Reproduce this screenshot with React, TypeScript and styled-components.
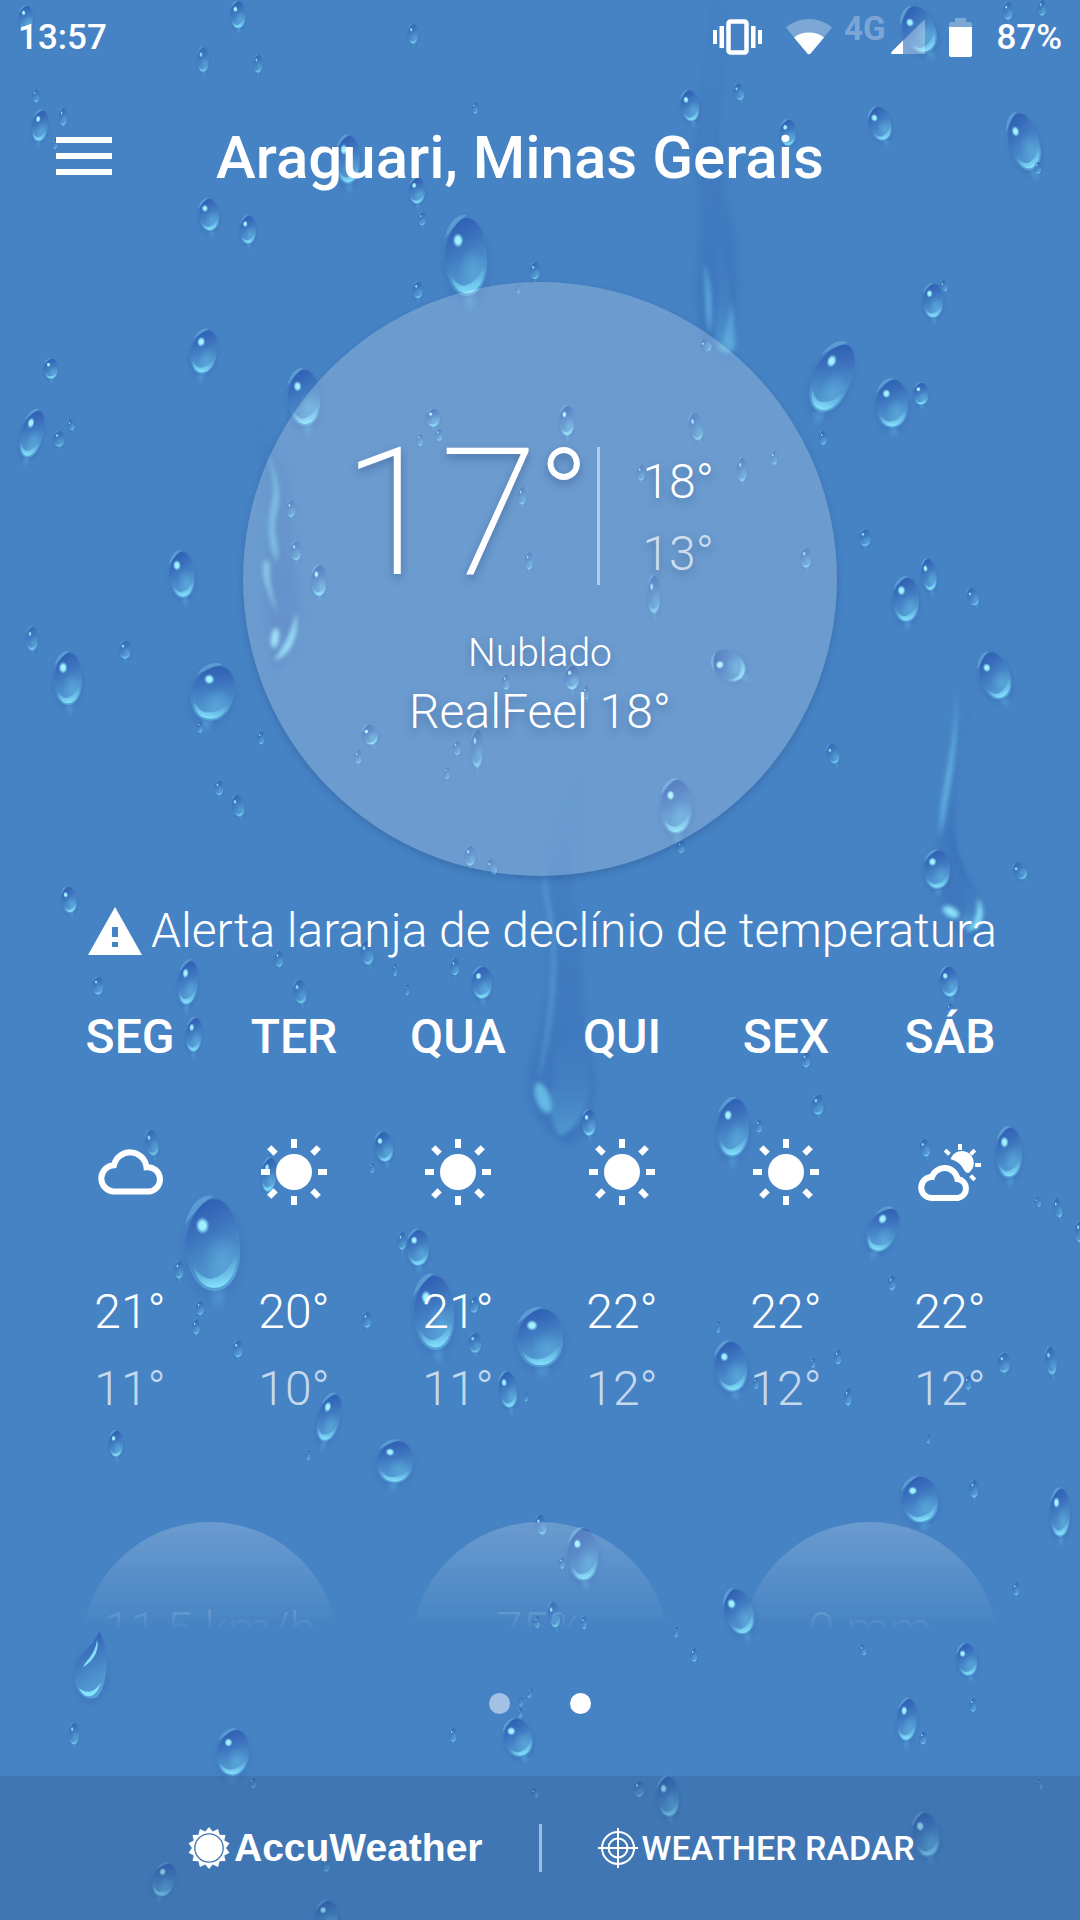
import React from "react";
import styled, { createGlobalStyle } from "styled-components";

const GlobalStyle = createGlobalStyle`
  *, *::before, *::after { box-sizing: border-box; }
  body { margin: 0; background: #4683c4; }
  h1, h2, p, ul { margin: 0; padding: 0; font-weight: inherit; }
  ul { list-style: none; }
`;

const Screen = styled.div`
  position: relative;
  min-height: 100vh;
  overflow: hidden;
  display: flex;
  flex-direction: column;
  background: #4683c4;
  color: #fff;
  font-family: Roboto, "Liberation Sans", sans-serif;
`;

const Backdrop = styled.svg`
  position: absolute;
  inset: 0;
  width: 100%;
  height: 100%;
  pointer-events: none;
`;

const StatusBar = styled.div`
  position: relative;
  display: flex;
  align-items: center;
  justify-content: space-between;
  height: 74px;
  padding: 0 18px;
  font-size: 35px;
  font-weight: 500;
`;

const StatusIcons = styled.div`
  display: flex;
  align-items: center;
  gap: 24px;
`;

const Network = styled.div`
  display: flex;
  align-items: center;
  gap: 6px;
`;

const Connections = styled.div`
  display: flex;
  align-items: center;
  gap: 12px;
`;

const NetworkLabel = styled.span`
  align-self: flex-start;
  font-size: 33px;
  line-height: 18px;
  font-weight: 700;
  color: rgba(255, 255, 255, 0.3);
`;

const Header = styled.header`
  position: relative;
  display: flex;
  align-items: center;
  gap: 104px;
  height: 164px;
  padding: 0 56px;
`;

const MenuButton = styled.button`
  display: flex;
  flex-direction: column;
  gap: 10px;
  width: 56px;
  padding: 0;
  border: 0;
  background: none;
  cursor: pointer;
`;

const MenuBar = styled.span`
  height: 6px;
  background: #fff;
`;

const City = styled.h1`
  padding-top: 4px;
  font-size: 60px;
  line-height: 72px;
  font-weight: 500;
`;

const Main = styled.main`
  position: relative;
  flex: 1;
  display: flex;
  flex-direction: column;
`;

const Current = styled.section`
  align-self: center;
  width: 594px;
  height: 594px;
  margin-top: 44px;
  padding-top: 138px;
  display: flex;
  flex-direction: column;
  align-items: center;
  border-radius: 50%;
  background: rgba(255, 255, 255, 0.2);
  box-shadow: 0 3px 6px rgba(20, 50, 110, 0.25);
  text-shadow: 0 4px 8px rgba(20, 50, 100, 0.35);
`;

const Readings = styled.div`
  display: flex;
  align-items: center;
  height: 192px;
  padding-right: 24px;
`;

const Temperature = styled.p`
  display: flex;
  align-items: flex-start;
  padding-bottom: 6px;
  font-size: 178px;
  line-height: 192px;
  font-weight: 200;
`;

const DegreeSign = styled.span`
  font-size: 136px;
  line-height: 164px;
  font-weight: 300;
`;

const Range = styled.div`
  display: flex;
  flex-direction: column;
  gap: 16px;
  margin-left: 8px;
  padding: 7px 0 3px 42px;
  border-left: 3px solid rgba(255, 255, 255, 0.5);
`;

const Degrees = styled.p<{ $low?: boolean }>`
  font-size: 48px;
  line-height: 56px;
  font-weight: 300;
  color: ${(p) => (p.$low ? "rgba(255, 255, 255, 0.7)" : "#fff")};
`;

const Condition = styled.p`
  margin-top: 17px;
  font-size: 39px;
  line-height: 48px;
  font-weight: 300;
`;

const RealFeel = styled.p`
  margin-top: 7px;
  font-size: 48px;
  line-height: 56px;
  font-weight: 300;
`;

const Alert = styled.a`
  display: flex;
  align-items: center;
  gap: 9px;
  margin-top: 26px;
  padding: 0 40px 0 88px;
  color: #fff;
  font-size: 48px;
  line-height: 58px;
  font-weight: 300;
  text-decoration: none;
  white-space: nowrap;
`;

const Forecast = styled.ul`
  display: grid;
  grid-template-columns: repeat(6, 1fr);
  margin-top: 49px;
  padding: 0 48px;
`;

const Day = styled.li`
  display: flex;
  flex-direction: column;
  align-items: center;
`;

const DayName = styled.h2`
  font-size: 48px;
  line-height: 56px;
  font-weight: 500;
`;

const DayIcon = styled.div`
  display: flex;
  align-items: center;
  justify-content: center;
  height: 66px;
  margin: 74px 0;
`;

const DayTemps = styled.div`
  display: flex;
  flex-direction: column;
  gap: 21px;
  padding-top: 5px;
`;

const Gauges = styled.div`
  display: grid;
  grid-template-columns: repeat(3, 1fr);
  height: 108px;
  margin-top: 105px;
  padding: 0 45px;
  overflow: hidden;
  mask-image: linear-gradient(#000, rgba(0, 0, 0, 0.5) 50%, transparent);
`;

const Gauge = styled.div`
  justify-self: center;
  width: 258px;
  height: 258px;
  padding-top: 80px;
  border-radius: 50%;
  background: rgba(255, 255, 255, 0.2);
  font-size: 48px;
  line-height: 56px;
  font-weight: 300;
  text-align: center;
`;

const Pager = styled.nav`
  display: flex;
  justify-content: center;
  gap: 60px;
  margin: 63px 0 60px;
`;

const Dot = styled.button<{ $active?: boolean }>`
  width: 21px;
  height: 21px;
  padding: 0;
  border: 0;
  border-radius: 50%;
  background: ${(p) => (p.$active ? "#fff" : "rgba(255, 255, 255, 0.5)")};
  cursor: pointer;
`;

const Footer = styled.footer`
  position: relative;
  display: grid;
  grid-template-columns: 1fr 3px 1fr;
  align-items: center;
  gap: 56px;
  height: 144px;
  background: rgba(50, 88, 140, 0.3);
`;

const FooterRule = styled.span`
  height: 48px;
  background: rgba(255, 255, 255, 0.5);
`;

const BrandLink = styled.a<{ $end?: boolean }>`
  justify-self: ${(p) => (p.$end ? "end" : "start")};
  display: flex;
  align-items: center;
  gap: 4px;
  color: #fff;
  text-decoration: none;
  white-space: nowrap;
  font-size: ${(p) => (p.$end ? "39px" : "34px")};
  font-weight: ${(p) => (p.$end ? 700 : 500)};
  font-family: ${(p) =>
    p.$end ? '"Liberation Sans", Arial, sans-serif' : 'Roboto, "Liberation Sans", sans-serif'};
`;

/* ---------- wallpaper ---------- */

// centre x, centre y, width, height, tilt in degrees
type DropSpec = [number, number, number, number, number?];

const drops: DropSpec[] = [
  [26, 18, 14, 24], [238, 15, 15, 27], [413, 34, 10, 20], [203, 60, 12, 25], [258, 64, 9, 18],
  [36, 96, 7, 13], [40, 126, 16, 31, 8], [63, 117, 8, 18], [55, 144, 6, 10], [475, 108, 6, 12],
  [348, 160, 24, 48], [690, 106, 18, 31, -8], [739, 92, 10, 17, -12], [788, 133, 16, 26],
  [880, 124, 22, 34, -15], [1024, 142, 30, 58, -16], [1038, 168, 7, 12], [209, 215, 20, 32, -5],
  [248, 230, 16, 28], [417, 191, 16, 26], [422, 219, 8, 13], [466, 257, 42, 78, -2],
  [1008, 11, 10, 18], [1042, 8, 8, 16], [919, 30, 32, 48, -22],
  [204, 352, 26, 44, 10], [51, 369, 14, 20], [32, 434, 22, 48, 15], [59, 439, 11, 16],
  [71, 425, 7, 11, -15], [182, 575, 25, 46, -4], [32, 639, 12, 24], [125, 650, 12, 18],
  [68, 679, 28, 52], [213, 693, 42, 56, 16], [200, 727, 6, 12], [219, 788, 9, 15],
  [238, 806, 12, 22, -12], [933, 301, 20, 34], [944, 286, 7, 11, -15], [832, 378, 38, 72, 22],
  [892, 404, 32, 48], [921, 394, 15, 22], [823, 438, 8, 14], [865, 538, 12, 17],
  [906, 600, 26, 44], [929, 575, 15, 32, -8], [973, 597, 11, 18, -20], [995, 676, 30, 48, -18],
  [833, 754, 12, 20, -15], [937, 870, 26, 38], [1020, 871, 13, 18, -30],
  [418, 290, 10, 17], [535, 271, 10, 17], [518, 289, 5, 9], [304, 398, 32, 56, -4],
  [433, 418, 14, 18], [420, 440, 7, 12], [439, 435, 8, 12], [567, 421, 15, 30],
  [696, 427, 13, 28, -12], [774, 458, 7, 14], [742, 470, 10, 24], [641, 473, 8, 16],
  [291, 509, 9, 17], [296, 551, 11, 19], [319, 581, 15, 31], [522, 496, 8, 18],
  [529, 561, 8, 18], [806, 558, 11, 20], [654, 595, 13, 38], [729, 666, 28, 36, -50],
  [572, 678, 14, 24], [586, 693, 6, 14], [506, 682, 8, 16], [370, 735, 15, 20, -15],
  [358, 757, 8, 13], [457, 748, 8, 14], [477, 749, 12, 38], [447, 773, 6, 12],
  [676, 807, 31, 54], [681, 847, 8, 12], [470, 856, 11, 20], [492, 867, 9, 16, -20],
  [706, 345, 10, 13, -35], [261, 738, 7, 13],
  [69, 900, 15, 26, -8], [367, 953, 13, 24, -8], [279, 959, 9, 16], [455, 967, 9, 17],
  [395, 970, 5, 13], [407, 990, 5, 11], [98, 986, 11, 18], [188, 983, 20, 44, 6],
  [300, 992, 13, 24, -8], [482, 983, 20, 32], [949, 982, 18, 30, -6], [950, 1009, 8, 10],
  [194, 1035, 16, 34, 4], [806, 1060, 9, 15], [818, 1105, 12, 20], [733, 1128, 32, 58, 3],
  [759, 1126, 7, 13], [925, 1148, 10, 18, -10], [1009, 1153, 26, 50], [152, 1143, 13, 26, -8],
  [269, 1175, 15, 34, 5], [384, 1147, 18, 30, -8], [372, 1168, 6, 10], [589, 1123, 14, 26],
  [1038, 1202, 6, 10, -15], [1058, 1208, 8, 20, -12], [213, 1245, 54, 92, -3],
  [883, 1230, 28, 46, 24], [1080, 1232, 10, 22], [179, 1270, 9, 18], [418, 1248, 22, 36],
  [402, 1241, 9, 18], [200, 1308, 8, 14], [196, 1327, 8, 15], [238, 1349, 10, 17],
  [367, 1320, 9, 16], [434, 1313, 40, 74, -3], [474, 1305, 9, 16], [475, 1343, 13, 20],
  [540, 1338, 46, 58], [508, 1390, 18, 36, -6], [526, 1397, 5, 9], [329, 1418, 22, 48, 14],
  [308, 1455, 5, 10], [116, 1444, 14, 26], [395, 1462, 36, 42, 8], [731, 1367, 32, 50, -6],
  [756, 1383, 6, 12], [718, 1327, 5, 12], [813, 1363, 6, 10], [838, 1357, 7, 15],
  [848, 1397, 8, 18], [892, 1283, 8, 15], [1004, 1363, 12, 20], [1051, 1361, 11, 28, -6],
  [968, 1383, 7, 14], [928, 1439, 5, 9], [920, 1500, 36, 46, -6], [974, 1489, 9, 18],
  [1060, 1513, 20, 48], [541, 1525, 11, 20, -10], [583, 1555, 30, 52, -2], [562, 1563, 6, 12],
  [554, 1615, 12, 26, -8], [584, 1623, 6, 13], [537, 1622, 6, 12], [739, 1612, 28, 46, -16],
  [676, 1632, 5, 11], [694, 1655, 7, 14], [863, 1650, 6, 11, -15], [1016, 1589, 7, 13],
  [967, 1660, 20, 32, -8], [907, 1720, 20, 42, 4], [973, 1705, 7, 14], [923, 1738, 7, 13],
  [74, 1734, 10, 22], [233, 1753, 32, 46, 6], [253, 1783, 7, 10],
  [453, 1735, 7, 14], [518, 1738, 28, 38, -14], [530, 1693, 5, 10, 15], [521, 1702, 5, 9],
  [520, 1713, 6, 10], [535, 1793, 7, 10, -20], [639, 1789, 11, 16], [668, 1797, 22, 40, -4],
  [1040, 1784, 5, 10, -15], [926, 1835, 26, 44, -8], [164, 1880, 22, 34, 18],
  [326, 1865, 8, 14], [327, 1917, 22, 32],
];

function Drop({ spec: [cx, cy, w, h, tilt = 0] }: { spec: DropSpec }) {
  const small = w < 14;
  const glint = small ? 3 : w > 28 ? 2.6 : 3.2;
  return (
    <g
      transform={`translate(${cx} ${cy}) rotate(${tilt}) scale(${w / 20} ${h / 30})`}
      opacity={small ? 0.75 : 1}
    >
      <ellipse cy="2" rx="14" ry="20" fill="url(#dropShade)" />
      <ellipse cx="1" cy="17" rx="4" ry="5" fill="url(#dropTail)" />
      <path
        d="M1 -15C7 -15 10 -7 10 1C10 9 6 15 0 15C-6 15 -10 9 -10 1C-10 -6 -5 -15 1 -15Z"
        fill="url(#dropBody)"
      />
      <path
        d="M-8 6C-7 11 -4 14 0 14C5 14 9 9 9 1C7 7 4 10 -1 11C-4 11 -6 9 -8 6Z"
        fill="url(#dropRim)"
      />
      <ellipse cx="3" cy="5" rx="7" ry="9" fill="url(#dropGlow)" />
      <path d="M-10 -7C-8 -13 -4 -17 1 -16C-3 -14 -6 -11 -10 -7Z" fill="#7cc6ee" opacity="0.4" />
      <ellipse cx="-3.5" cy="-6.5" rx={glint} ry={glint * 1.1} fill="url(#dropGlint)" />
    </g>
  );
}

function Wallpaper() {
  return (
    <Backdrop viewBox="0 0 1080 1920" preserveAspectRatio="xMidYMin slice" aria-hidden="true">
      <defs>
        <radialGradient id="dropShade">
          <stop offset="0.5" stopColor="#2c60ae" stopOpacity="0.5" />
          <stop offset="0.75" stopColor="#3569b5" stopOpacity="0.25" />
          <stop offset="1" stopColor="#3569b5" stopOpacity="0" />
        </radialGradient>
        <linearGradient id="dropBody" x1="0.3" y1="0" x2="0.6" y2="1">
          <stop offset="0" stopColor="#2d5db2" />
          <stop offset="0.3" stopColor="#3b70bc" />
          <stop offset="0.65" stopColor="#4a8cca" />
          <stop offset="1" stopColor="#57a4d8" />
        </linearGradient>
        <linearGradient id="dropRim" x1="0" y1="0" x2="0.2" y2="1">
          <stop offset="0.4" stopColor="#7fdcfa" stopOpacity="0" />
          <stop offset="1" stopColor="#86e4ff" stopOpacity="0.9" />
        </linearGradient>
        <radialGradient id="dropGlow">
          <stop offset="0" stopColor="#64b6e4" stopOpacity="0.5" />
          <stop offset="1" stopColor="#64b6e4" stopOpacity="0" />
        </radialGradient>
        <radialGradient id="dropTail">
          <stop offset="0" stopColor="#62b6e6" stopOpacity="0.4" />
          <stop offset="1" stopColor="#62b6e6" stopOpacity="0" />
        </radialGradient>
        <radialGradient id="dropGlint">
          <stop offset="0.45" stopColor="#a0f0ff" />
          <stop offset="1" stopColor="#8be2fb" stopOpacity="0" />
        </radialGradient>
        <linearGradient id="streakFade" x1="0" y1="0" x2="0" y2="1">
          <stop offset="0" stopColor="#3468b5" stopOpacity="0" />
          <stop offset="0.5" stopColor="#3468b5" stopOpacity="0.3" />
          <stop offset="1" stopColor="#3468b5" stopOpacity="0.5" />
        </linearGradient>
        <linearGradient id="streakCore" x1="0" y1="0" x2="0" y2="1">
          <stop offset="0" stopColor="#4683c4" stopOpacity="0" />
          <stop offset="0.6" stopColor="#4b90cd" stopOpacity="0.4" />
          <stop offset="1" stopColor="#5cabdc" stopOpacity="0.9" />
        </linearGradient>
        <filter id="soft" x="-50%" y="-10%" width="200%" height="120%">
          <feGaussianBlur stdDeviation="4" />
        </filter>
        <filter id="fine" x="-50%" y="-10%" width="200%" height="120%">
          <feGaussianBlur stdDeviation="2" />
        </filter>
      </defs>

      {/* trail at the top right */}
      <g filter="url(#soft)">
        <path
          d="M716 0C712 60 694 110 698 180C704 240 690 270 700 330L728 362C740 320 744 250 728 200C708 140 728 60 724 0Z"
          fill="url(#streakFade)"
        />
      </g>
      <g filter="url(#fine)">
        <path d="M708 200C722 240 718 290 714 344C722 356 732 356 734 350C730 300 730 250 708 200Z" fill="url(#streakCore)" opacity="0.7" />
        <path d="M703 262C708 280 702 310 710 334C714 310 712 280 703 262Z" fill="#66b6e4" opacity="0.7" />
        <path d="M732 300C730 320 724 340 718 350C728 354 734 350 736 344Z" fill="#66b6e4" opacity="0.6" />
        <path d="M716 0C712 60 694 110 698 190M726 0C728 60 708 120 722 190" fill="none" stroke="#376db9" strokeWidth="2" opacity="0.35" />
      </g>

      {/* trail at the left */}
      <g filter="url(#soft)">
        <path
          d="M246 360C254 430 272 480 266 560C258 600 268 630 274 672C308 645 304 600 292 550C294 500 296 470 262 430Z"
          fill="url(#streakFade)"
        />
      </g>
      <g filter="url(#fine)">
        <path d="M266 450C284 490 280 500 275 522C274 540 282 550 276 562C266 540 268 520 272 500C276 480 270 466 266 450Z" fill="#66b8e4" opacity="0.8" />
        <path d="M264 560C260 580 272 600 277 614C272 590 268 580 270 562Z" fill="#7cc8ee" opacity="0.8" />
        <path d="M296 612C292 635 280 652 274 660C288 658 300 640 296 612Z" fill="#7fd4f4" />
        <ellipse cx="275" cy="638" rx="4" ry="10" fill="#8adcf8" transform="rotate(8 275 638)" />
      </g>

      {/* trail in the middle */}
      <g filter="url(#soft)">
        <path
          d="M580 766C556 830 536 880 546 960C550 1010 530 1050 526 1080C526 1115 550 1140 572 1146C596 1120 600 1085 590 1050C578 1010 590 960 574 900C570 850 586 810 580 766Z"
          fill="url(#streakFade)"
        />
      </g>
      <g filter="url(#fine)">
        <path d="M545 868C538 900 556 930 550 980C548 1030 540 1060 538 1080C546 1060 556 1010 556 970C558 920 548 900 545 868Z" fill="#5ba8dc" opacity="0.5" />
        <path d="M556 1050C552 1100 546 1120 560 1136C584 1126 594 1096 588 1066C586 1040 578 1020 574 1000C576 1030 566 1040 556 1050Z" fill="url(#streakCore)" opacity="0.75" />
        <ellipse cx="543" cy="1098" rx="7" ry="16" fill="#64b8e4" transform="rotate(-20 543 1098)" />
      </g>

      {/* trail at the right */}
      <g filter="url(#soft)">
        <path
          d="M972 660C964 760 940 800 934 870C936 900 950 934 974 940C994 934 986 908 972 888C944 850 956 780 976 690Z"
          fill="url(#streakFade)"
        />
      </g>
      <g filter="url(#fine)">
        <path d="M957 690C954 760 938 790 940 838C946 810 958 760 957 690Z" fill="#62b2e2" opacity="0.9" />
        <path d="M951 800C948 850 956 870 978 896C970 880 950 860 951 800Z" fill="#2f62b2" opacity="0.6" />
        <path d="M960 880C974 892 984 910 980 924C974 934 964 930 958 924C968 916 964 900 960 880Z" fill="url(#streakCore)" />
        <path d="M978 898C988 914 982 930 966 932C976 924 978 914 978 898Z" fill="#86e0fa" />
        <ellipse cx="951" cy="912" rx="9" ry="5" fill="#8ae2fb" transform="rotate(30 951 912)" />
      </g>

      {/* teardrop at the lower left */}
      <g>
        <ellipse cx="91" cy="1676" rx="22" ry="34" fill="url(#dropShade)" />
        <path
          d="M99 1631C110 1646 109 1686 97 1697C83 1704 71 1686 75 1668C79 1652 93 1648 99 1631Z"
          fill="url(#dropBody)"
        />
        <path d="M97 1640C95 1655 87 1659 83 1667C91 1663 100 1652 97 1640Z" fill="#86e0fa" />
        <path d="M79 1688C84 1700 96 1700 101 1682C96 1692 87 1695 79 1688Z" fill="#86e4ff" />
      </g>

      {drops.map((spec) => (
        <Drop key={`${spec[0]}-${spec[1]}`} spec={spec} />
      ))}
    </Backdrop>
  );
}

/* ---------- icons ---------- */

const VibrateIcon = () => (
  <svg width="49" height="36" viewBox="0 0 49 36" fill="#fff" aria-label="Vibrar" role="img">
    <rect x="15.5" y="2.5" width="18" height="31" rx="2" fill="none" stroke="#fff" strokeWidth="4.5" />
    <rect x="0" y="11" width="4" height="14" />
    <rect x="6.5" y="7" width="4.5" height="22" />
    <rect x="38" y="7" width="4.5" height="22" />
    <rect x="45" y="11" width="4" height="14" />
  </svg>
);

const WifiIcon = () => (
  <svg width="46" height="36" viewBox="0 0 46 36" aria-label="Wi-Fi" role="img">
    <path d="M0 8.5Q10 0 23 0T46 8.5L25 34Q23 36.5 21 34Z" fill="#fff" opacity="0.3" />
    <path d="M8 18.5Q14 13.5 23 13.5T38 18.5L25 34Q23 36.5 21 34Z" fill="#fff" />
  </svg>
);

const SignalIcon = () => (
  <svg width="34" height="34" viewBox="0 0 34 34" aria-label="Sinal" role="img">
    <path d="M34 1.5Q34 -1 32 1L1 31.5Q-1 34 1.5 34H34Z" fill="#fff" opacity="0.3" />
    <path d="M12 20.5L1 31.5Q-1 34 1.5 34H12Z" fill="#fff" />
  </svg>
);

const BatteryIcon = () => (
  <svg width="23" height="39" viewBox="0 0 23 39" aria-label="Bateria" role="img">
    <path d="M6 0H17V4H21Q23 4 23 6V9H0V6Q0 4 2 4H6Z" fill="#fff" opacity="0.3" />
    <path d="M0 9H23V37Q23 39 21 39H2Q0 39 0 37Z" fill="#fff" />
  </svg>
);

const AlertIcon = () => (
  <svg width="54" height="48" viewBox="0 0 54 48" fill="#fff" fillRule="evenodd" aria-hidden="true">
    <path d="M27 0L54 48H0ZM24 20V30H30V20ZM24 35V40H30V35Z" />
  </svg>
);

const CloudIcon = () => (
  <svg width="66" height="46" viewBox="0 0 66 46" fill="none" stroke="#fff" strokeWidth="6" role="img" aria-label="Nublado">
    <path d="M16 42.5A13.2 13.2 0 0 1 17 16.2A16.5 16.5 0 0 1 49.5 18.2A12.2 12.2 0 0 1 52 42.5Z" />
  </svg>
);

const SunIcon = () => (
  <svg width="66" height="66" viewBox="-33 -33 66 66" fill="#fff" role="img" aria-label="Ensolarado">
    <circle r="18" />
    {[0, 90, 180, 270].map((a) => (
      <rect key={a} x="-3" y="-33" width="6" height="9" transform={`rotate(${a})`} />
    ))}
    {[45, 135, 225, 315].map((a) => (
      <rect key={a} x="-3" y="-35" width="6" height="9" transform={`rotate(${a})`} />
    ))}
  </svg>
);

const PartlyIcon = () => (
  <svg width="64" height="57" viewBox="0 0 64 57" role="img" aria-label="Parcialmente nublado">
    <path d="M32.5 15A12 12 0 1 1 50.5 29Q47.5 29 46 26Q42 17.5 32.5 15Z" fill="#fff" />
    <g fill="#fff" transform="translate(42 21)">
      {[-45, 0, 45, 90, 135].map((a) => (
        <rect key={a} x="-2" y="-21" width="4" height="6" transform={`rotate(${a})`} />
      ))}
    </g>
    <path d="M13.5 54A10.5 10.5 0 0 1 14 33A13.2 13.2 0 0 1 39.5 35A9.6 9.6 0 0 1 40 54Z" fill="none" stroke="#fff" strokeWidth="6" />
  </svg>
);

const starPoints = Array.from({ length: 28 }, (_, i) => {
  const r = i % 2 ? 17 : 21;
  const a = (i * Math.PI) / 14;
  return `${(r * Math.sin(a)).toFixed(2)},${(-r * Math.cos(a)).toFixed(2)}`;
}).join(" ");

const AccuIcon = () => (
  <svg width="42" height="42" viewBox="-21 -21 42 42" aria-hidden="true">
    <polygon points={starPoints} fill="#fff" />
    <circle r="14.2" fill="none" stroke="#4076b1" strokeWidth="1.3" />
  </svg>
);

const RadarIcon = () => (
  <svg width="40" height="40" viewBox="-20 -20 40 40" fill="none" stroke="#fff" strokeWidth="2" aria-hidden="true">
    <circle r="16" />
    <circle r="9.5" />
    <path d="M0 -20V20M-20 0H20" />
  </svg>
);

/* ---------- data ---------- */

const days = [
  { name: "SEG", Icon: CloudIcon, high: 21, low: 11 },
  { name: "TER", Icon: SunIcon, high: 20, low: 10 },
  { name: "QUA", Icon: SunIcon, high: 21, low: 11 },
  { name: "QUI", Icon: SunIcon, high: 22, low: 12 },
  { name: "SEX", Icon: SunIcon, high: 22, low: 12 },
  { name: "SÁB", Icon: PartlyIcon, high: 22, low: 12 },
];

const gauges = ["11,5 km/h", "75%", "0 mm"];

export default function App() {
  return (
    <Screen>
      <GlobalStyle />
      <Wallpaper />
      <StatusBar>
        <span>13:57</span>
        <StatusIcons>
          <VibrateIcon />
          <Connections>
            <WifiIcon />
            <Network>
              <NetworkLabel>4G</NetworkLabel>
              <SignalIcon />
            </Network>
          </Connections>
          <BatteryIcon />
          <span>87%</span>
        </StatusIcons>
      </StatusBar>
      <Header>
        <MenuButton aria-label="Menu">
          <MenuBar />
          <MenuBar />
          <MenuBar />
        </MenuButton>
        <City>Araguari, Minas Gerais</City>
      </Header>
      <Main>
        <Current>
          <Readings>
            <Temperature>
              17<DegreeSign>°</DegreeSign>
            </Temperature>
            <Range>
              <Degrees>18°</Degrees>
              <Degrees $low>13°</Degrees>
            </Range>
          </Readings>
          <Condition>Nublado</Condition>
          <RealFeel>RealFeel 18°</RealFeel>
        </Current>
        <Alert href="#alerta">
          <AlertIcon />
          Alerta laranja de declínio de temperatura
        </Alert>
        <Forecast>
          {days.map(({ name, Icon, high, low }) => (
            <Day key={name}>
              <DayName>{name}</DayName>
              <DayIcon>
                <Icon />
              </DayIcon>
              <DayTemps>
                <Degrees>{high}°</Degrees>
                <Degrees $low>{low}°</Degrees>
              </DayTemps>
            </Day>
          ))}
        </Forecast>
        <Gauges>
          {gauges.map((value) => (
            <Gauge key={value}>{value}</Gauge>
          ))}
        </Gauges>
        <Pager aria-label="Páginas">
          <Dot aria-label="Página 1" />
          <Dot $active aria-label="Página 2" />
        </Pager>
      </Main>
      <Footer>
        <BrandLink $end href="#accuweather">
          <AccuIcon />
          AccuWeather
        </BrandLink>
        <FooterRule />
        <BrandLink href="#radar">
          <RadarIcon />
          WEATHER RADAR
        </BrandLink>
      </Footer>
    </Screen>
  );
}
